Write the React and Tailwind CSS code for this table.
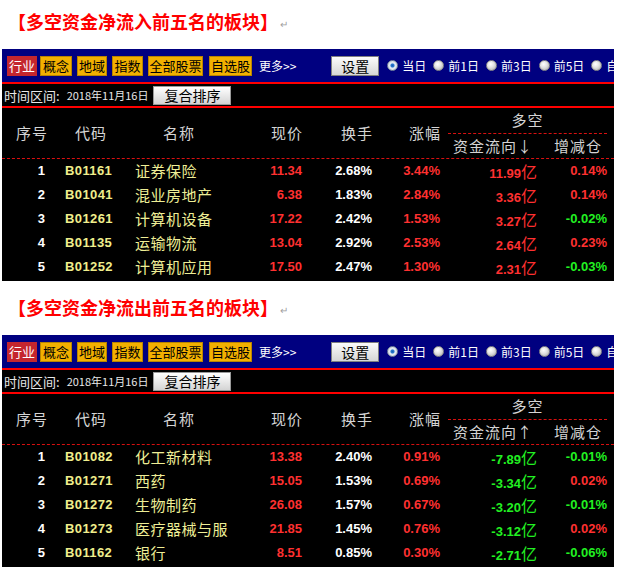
import React from "react";

const inflowRows = [
  { no: 1, code: "B01161", name: "证券保险", price: "11.34", turn: "2.68%", chg: "3.44%", flow: "11.99", pos: "0.14%", posUp: true },
  { no: 2, code: "B01041", name: "混业房地产", price: "6.38", turn: "1.83%", chg: "2.84%", flow: "3.36", pos: "0.14%", posUp: true },
  { no: 3, code: "B01261", name: "计算机设备", price: "17.22", turn: "2.42%", chg: "1.53%", flow: "3.27", pos: "-0.02%", posUp: false },
  { no: 4, code: "B01135", name: "运输物流", price: "13.04", turn: "2.92%", chg: "2.53%", flow: "2.64", pos: "0.23%", posUp: true },
  { no: 5, code: "B01252", name: "计算机应用", price: "17.50", turn: "2.47%", chg: "1.30%", flow: "2.31", pos: "-0.03%", posUp: false },
];

const outflowRows = [
  { no: 1, code: "B01082", name: "化工新材料", price: "13.38", turn: "2.40%", chg: "0.91%", flow: "-7.89", pos: "-0.01%", posUp: false },
  { no: 2, code: "B01271", name: "西药", price: "15.05", turn: "1.53%", chg: "0.69%", flow: "-3.34", pos: "0.02%", posUp: true },
  { no: 3, code: "B01272", name: "生物制药", price: "26.08", turn: "1.57%", chg: "0.67%", flow: "-3.20", pos: "-0.01%", posUp: false },
  { no: 4, code: "B01273", name: "医疗器械与服务", price: "21.85", turn: "1.45%", chg: "0.76%", flow: "-3.12", pos: "0.02%", posUp: true },
  { no: 5, code: "B01162", name: "银行", price: "8.51", turn: "0.85%", chg: "0.30%", flow: "-2.71", pos: "-0.06%", posUp: false },
];

function Radio({ checked, label }) {
  return (
    <div className="flex items-center shrink-0">
      <span
        className={
          checked
            ? "w-[11px] h-[11px] rounded-full border border-[#7a8aa0] bg-[radial-gradient(circle,#1a5fb4_0,#2a7ad0_25%,#e8eef6_40%,#c0c8d0_100%)]"
            : "w-[11px] h-[11px] rounded-full border border-[#8c8c8c] bg-[radial-gradient(circle_at_40%_35%,#ffffff_0,#e4e4e4_40%,#a8a8a8_100%)]"
        }
      />
      <span className="ml-[4px] text-[12px] leading-none text-white whitespace-nowrap">{label}</span>
    </div>
  );
}

function NavBar() {
  const tab = "h-[20px] flex items-center justify-center text-[13px] leading-none shrink-0";
  return (
    <div className="h-[33px] bg-[#000080] flex items-center pl-[5px] overflow-hidden font-['Noto_Sans_CJK_SC',sans-serif]">
      <div className={tab + " w-[30px] bg-[#c4262e] text-white"}>行业</div>
      <div className={tab + " w-[32px] ml-[3px] bg-[#f2b000] border border-[#b88400] text-black"}>概念</div>
      <div className={tab + " w-[30px] ml-[5px] bg-[#f2b000] border border-[#b88400] text-black"}>地域</div>
      <div className={tab + " w-[31px] ml-[5px] bg-[#f2b000] border border-[#b88400] text-black"}>指数</div>
      <div className={tab + " w-[55px] ml-[5px] bg-[#f2b000] border border-[#b88400] text-black"}>全部股票</div>
      <div className={tab + " w-[43px] ml-[6px] bg-[#f2b000] border border-[#b88400] text-black"}>自选股</div>
      <div className="ml-[7px] text-[12px] text-white whitespace-nowrap shrink-0">更多&gt;&gt;</div>
      <div className="ml-[35px] w-[48px] h-[20px] shrink-0 flex items-center justify-center border border-[#808080] bg-[linear-gradient(#fbfbfb,#d6d6d6)] text-[14px] leading-none text-black">
        设置
      </div>
      <div className="ml-[8px] flex items-center gap-[7px]">
        <Radio checked label="当日" />
        <Radio label="前1日" />
        <Radio label="前3日" />
        <Radio label="前5日" />
        <Radio label="自定义" />
      </div>
    </div>
  );
}

function TimeRow() {
  return (
    <div className="h-[22px] bg-black flex items-center pl-[2px] font-['Noto_Sans_CJK_SC',sans-serif]">
      <span className="text-[13px] leading-none text-[#e8e8e8]">时间区间:</span>
      <span className="ml-[7px] text-[11px] leading-none text-[#e8e8e8]">2018年11月16日</span>
      <div className="ml-[5px] w-[78px] h-[19px] flex items-center justify-center border border-[#9a9a9a] bg-[linear-gradient(#ffffff,#d4d4d4)] text-[14px] leading-none text-black">
        复合排序
      </div>
    </div>
  );
}

function Amount({ value, color }) {
  return (
    <span className={color}>
      {value}
      <span className="font-normal text-[16px] font-['Noto_Sans_CJK_SC',sans-serif]">亿</span>
    </span>
  );
}

function Panel({ rows, inflow }) {
  const red = "text-[#ff3030]";
  const green = "text-[#22f022]";
  return (
    <div className="w-[612px] bg-black">
      <NavBar />
      <div className="h-[2px] bg-[#ff0000]" />
      <TimeRow />
      <div className="h-[2px] bg-[#ff0000]" />

      {/* header */}
      <div className="flex h-[50px] text-[15px] tracking-[1px] text-[#d4d4d4] font-['Noto_Sans_CJK_SC',sans-serif]">
        <div className="w-[46px] flex items-center justify-end">序号</div>
        <div className="w-[80px] flex items-center pl-[27px]">代码</div>
        <div className="w-[100px] flex items-center pl-[35px]">名称</div>
        <div className="w-[76px] flex items-center justify-end pr-[1px]">现价</div>
        <div className="w-[70px] flex items-center justify-end pr-[1px]">换手</div>
        <div className="w-[68px] flex items-center justify-end pr-[1px]">涨幅</div>
        <div className="w-[168px] flex flex-col">
          <div className="h-[26px] ml-[6px] mr-[3px] flex items-center justify-center border-b border-dashed border-[#d81010]">
            多空
          </div>
          <div className="flex-1 flex items-center">
            <div className="w-[98px] pl-[11px]">{inflow ? "资金流向↓" : "资金流向↑"}</div>
            <div className="pl-[14px]">增减仓</div>
          </div>
        </div>
      </div>
      <div className="h-[1px] border-t border-dashed border-[#d81010]" />

      {/* rows */}
      <div className="pb-[2px]">
        {rows.map((r) => (
          <div key={r.no} className="flex h-[24px] items-center text-[13px] font-bold font-['Liberation_Sans','Noto_Sans_CJK_SC',sans-serif]">
            <div className="w-[46px] text-right pr-[3px] text-white">{r.no}</div>
            <div className="w-[80px] pl-[17px] text-[#f0ee8c] tracking-[0.4px]">{r.code}</div>
            <div className="w-[100px] pl-[7px] overflow-hidden whitespace-nowrap font-normal text-[15px] tracking-[0.5px] text-[#eeee96] font-['Noto_Sans_CJK_SC',sans-serif]">
              {r.name}
            </div>
            <div className={"w-[76px] text-right pr-[2px] " + red}>{r.price}</div>
            <div className="w-[70px] text-right pr-[2px] text-white">{r.turn}</div>
            <div className={"w-[68px] text-right pr-[2px] " + red}>{r.chg}</div>
            <div className="w-[98px] text-right pr-[3px]">
              <Amount value={r.flow} color={inflow ? red : green} />
            </div>
            <div className={"w-[70px] text-right pr-[3px] " + (r.posUp ? red : green)}>{r.pos}</div>
          </div>
        ))}
      </div>
    </div>
  );
}

function Title({ children }) {
  return (
    <div className="flex items-center pl-[8px] h-[20px] font-['Noto_Sans_CJK_SC',sans-serif]">
      <span className="text-[18px] leading-none font-bold text-[#ff0000]">{children}</span>
      <span className="ml-[2px] mt-[4px] text-[10px] text-[#a0a0a0]">↵</span>
    </div>
  );
}

export default function App() {
  return (
    <div className="w-[617px] h-[574px] bg-white overflow-hidden">
      <div className="pt-[11px] h-[49px]">
        <Title>【多空资金净流入前五名的板块】</Title>
      </div>
      <div className="pl-[2px]">
        <Panel rows={inflowRows} inflow />
      </div>
      <div className="pt-[16px] h-[54px]">
        <Title>【多空资金净流出前五名的板块】</Title>
      </div>
      <div className="pl-[2px]">
        <Panel rows={outflowRows} inflow={false} />
      </div>
    </div>
  );
}
